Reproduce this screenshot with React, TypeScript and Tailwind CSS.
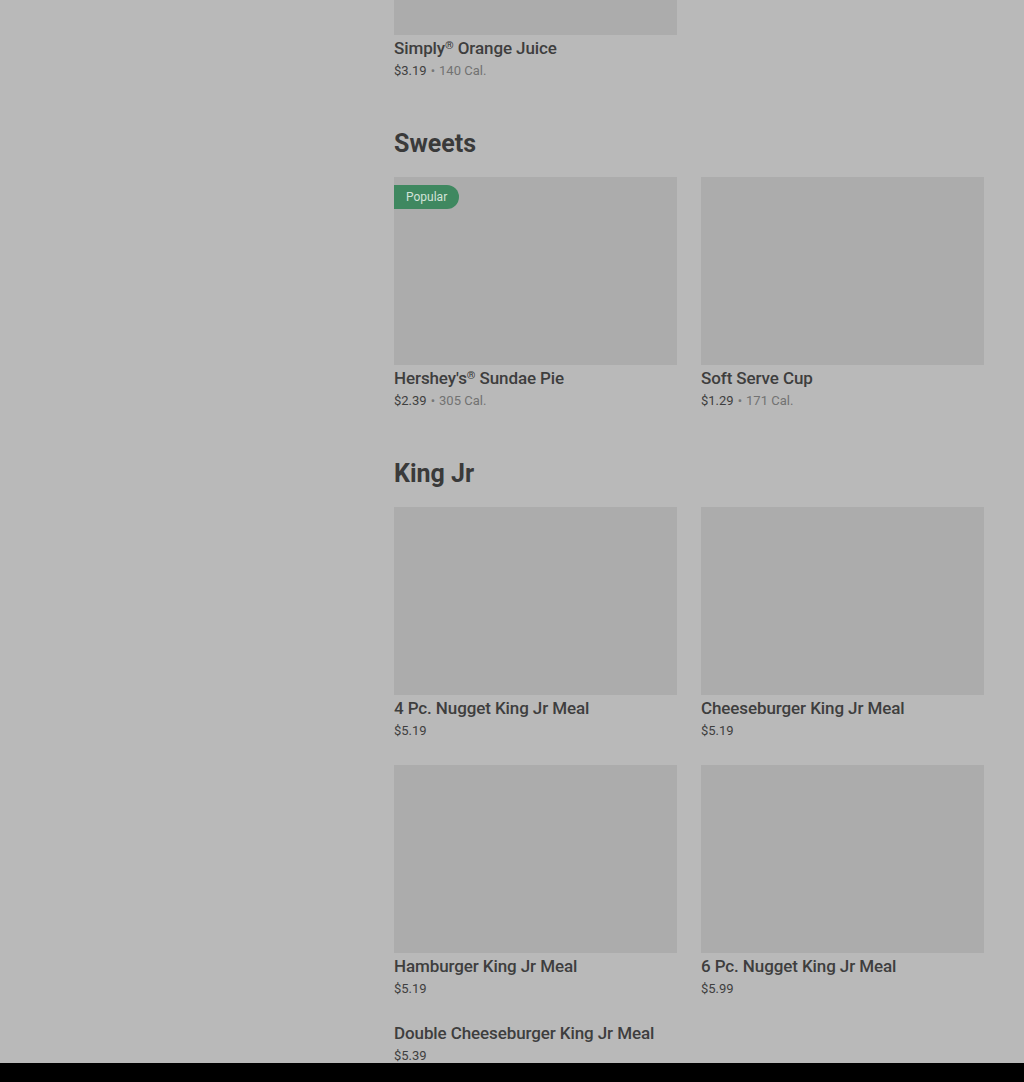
const font = { fontFamily: 'Roboto, "Noto Sans", sans-serif' };

type Item = { name: string; reg?: boolean; rest?: string; price: string; cal?: string; popular?: boolean; noImage?: boolean };

const SWEETS: Item[] = [
  { name: "Hershey's", reg: true, rest: ' Sundae Pie', price: '$2.39', cal: '305 Cal.', popular: true },
  { name: 'Soft Serve Cup', price: '$1.29', cal: '171 Cal.' },
];

const KING_JR: Item[] = [
  { name: '4 Pc. Nugget King Jr Meal', price: '$5.19' },
  { name: 'Cheeseburger King Jr Meal', price: '$5.19' },
  { name: 'Hamburger King Jr Meal', price: '$5.19' },
  { name: '6 Pc. Nugget King Jr Meal', price: '$5.99' },
  { name: 'Double Cheeseburger King Jr Meal', price: '$5.39', noImage: true },
];

function ItemText({ item }: { item: Item }) {
  return (
    <>
      <p className={`${item.noImage ? '' : 'mt-[3px]'} h-5 text-[17px] leading-5 font-medium tracking-[-0.1px] whitespace-nowrap text-[#3e3e3e]`}>
        {item.name}
        {item.reg && <span className="relative -top-[5px] text-[11px] leading-none">®</span>}
        {item.rest}
      </p>
      <p className="mt-[3px] text-[13px] leading-5 whitespace-nowrap">
        <span className="text-[#3f3f3f]">{item.price}</span>
        {item.cal && (
          <>
            <span className="mx-1 text-[#777]">•</span>
            <span className="text-[#727272]">{item.cal}</span>
          </>
        )}
      </p>
    </>
  );
}

function Card({ item }: { item: Item }) {
  return (
    <div className="w-[283px]">
      {!item.noImage && (
        <div className="relative h-[188px] bg-[#acacac]">
          {item.popular && (
            <span className="absolute top-2 left-0 flex h-6 items-center rounded-r-full bg-[#3f8860] px-3 text-[12px] text-[#d2e3d9]">
              Popular
            </span>
          )}
        </div>
      )}
      <ItemText item={item} />
    </div>
  );
}

function Section({ title, items }: { title: string; items: Item[] }) {
  return (
    <section className="mt-[47px]">
      <h2 className="text-[25px] leading-8 font-bold text-[#3a3a3a]">{title}</h2>
      <div className="mt-[17px] grid grid-cols-[283px_283px] gap-x-6 gap-y-6">
        {items.map((item) => (
          <Card key={item.name} item={item} />
        ))}
      </div>
    </section>
  );
}

export default function App() {
  return (
    <div className="flex h-[1082px] flex-col overflow-hidden bg-[#b9b9b9]" style={font}>
      <div className="flex flex-1 overflow-hidden">
        <div className="w-[394px] shrink-0" />
        <main className="w-[590px]">
          {/* tail of previous section */}
          <div className="w-[283px]">
            <div className="h-[35px] bg-[#acacac]" />
            <ItemText item={{ name: 'Simply', reg: true, rest: ' Orange Juice', price: '$3.19', cal: '140 Cal.' }} />
          </div>
          <Section title="Sweets" items={SWEETS} />
          <Section title="King Jr" items={KING_JR} />
        </main>
      </div>
      <div className="h-[19px] shrink-0 bg-black" />
    </div>
  );
}
